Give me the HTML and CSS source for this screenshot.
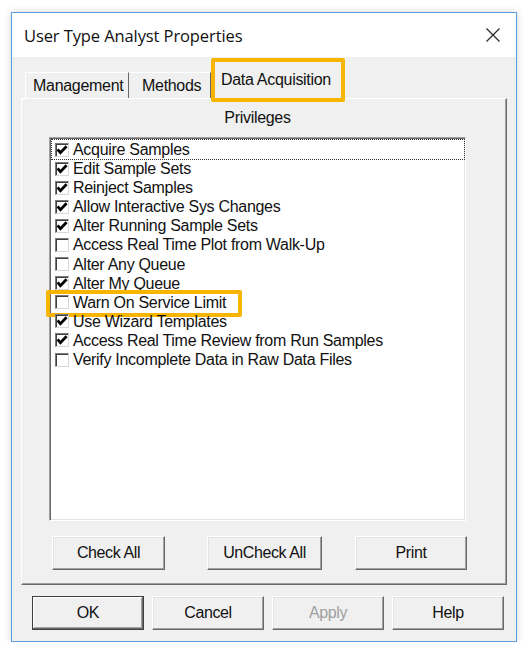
FILE: index.html
```html
<!DOCTYPE html>
<html>
<head>
<meta charset="utf-8">
<link rel="stylesheet" href="styles.css">
</head>
<body>
<div class="window">
  <div class="titlebar">
    <span class="title">User Type Analyst Properties</span>
    <svg class="close" width="16" height="16" viewBox="0 0 16 16"><path d="M1.5 1.5 L14.5 14.5 M14.5 1.5 L1.5 14.5" stroke="#2b2b2b" stroke-width="1.3" fill="none"/></svg>
  </div>
  <div class="client">
    <div class="tabstrip">
      <div class="tab tab-mgmt">Management</div>
      <div class="tab tab-meth">Methods</div>
      <div class="tab tab-sel">Data Acquisition</div>
    </div>
    <div class="panel">
      <div class="group">
        <div class="label">Privileges</div>
        <div class="list">
          <div class="item focus"><span class="cb on"></span>Acquire Samples</div>
          <div class="item"><span class="cb on"></span>Edit Sample Sets</div>
          <div class="item"><span class="cb on"></span>Reinject Samples</div>
          <div class="item"><span class="cb on"></span>Allow Interactive Sys Changes</div>
          <div class="item"><span class="cb on"></span>Alter Running Sample Sets</div>
          <div class="item"><span class="cb"></span>Access Real Time Plot from Walk-Up</div>
          <div class="item"><span class="cb"></span>Alter Any Queue</div>
          <div class="item"><span class="cb on"></span>Alter My Queue</div>
          <div class="item hl-row"><span class="cb"></span>Warn On Service Limit<span class="hl"></span></div>
          <div class="item"><span class="cb on"></span>Use Wizard Templates</div>
          <div class="item"><span class="cb on"></span>Access Real Time Review from Run Samples</div>
          <div class="item"><span class="cb"></span>Verify Incomplete Data in Raw Data Files</div>
        </div>
      </div>
      <div class="btnrow">
        <button class="btn b-check">Check All</button>
        <button class="btn b-uncheck">UnCheck All</button>
        <button class="btn b-print">Print</button>
      </div>
    </div>
    <div class="dlgrow">
      <button class="btn dlg default">OK</button>
      <button class="btn dlg">Cancel</button>
      <button class="btn dlg disabled">Apply</button>
      <button class="btn dlg">Help</button>
    </div>
  </div>
</div>
</body>
</html>
```
FILE: styles.css
```css
* { box-sizing: border-box; }
html, body { margin: 0; padding: 0; background: #fff; }
body { font-family: "Liberation Sans", Arial, sans-serif; }

.window {
  margin: 12px 0 0 11px;
  width: 506px;
  height: 630px;
  border: 1px solid #5e9de2;
  background: #f0f0f0;
  box-shadow: 0 0 7px rgba(0,0,0,0.18);
  display: flex;
  flex-direction: column;
}

.titlebar {
  height: 44px;
  background: #fff;
  display: flex;
  align-items: center;
  justify-content: space-between;
  padding: 0 15px 0 12px;
}
.title {
  font-family: "Open Sans", "Noto Sans", sans-serif;
  font-size: 16.5px;
  color: #111;
  letter-spacing: -0.1px;
}
.close { display: block; }

.client {
  flex: 1;
  padding: 0 9px 0 9px;
  display: flex;
  flex-direction: column;
  font-size: 16px;
  letter-spacing: -0.3px;
  color: #111;
}

.tabstrip {
  height: 41px;
  display: flex;
  align-items: flex-end;
  padding-left: 4px;
}
.tab {
  height: 26px;
  display: flex;
  align-items: center;
  border-top: 1px solid #fff;
  border-left: 1px solid #fff;
  border-right: 1px solid #696969;
}
.tab-mgmt { width: 104px; padding-left: 7px; }
.tab-meth { width: 82px; padding-left: 13px; border-left: none; }
.tab-sel {
  position: relative;
  z-index: 1;
  width: 134px;
  height: 44px;
  margin-bottom: -4px;
  border: 4px solid #f8b500;
  border-radius: 2px;
  background: #f0f0f0;
  padding-left: 6px;
  padding-bottom: 0;
}

.panel {
  height: 487px;
  width: 486px;
  border-top: 1px solid #fff;
  border-left: 1px solid #fff;
  border-right: 1px solid #696969;
  border-bottom: 1px solid #696969;
  box-shadow: inset -1px -1px 0 #a0a0a0;
  padding-left: 27px;
  display: flex;
  flex-direction: column;
}

.group { width: 417px; }
.label {
  margin-top: 9px;
  height: 20px;
  line-height: 20px;
  text-align: center;
  margin-bottom: 9px;
}
.list {
  height: 384px;
  background: #fff;
  border: 1px solid;
  border-color: #a0a0a0 #fff #fff #a0a0a0;
  box-shadow: inset 1px 1px 0 #696969, inset -1px -1px 0 #e3e3e3;
  padding: 2px 1px 0 2px;
}
.item {
  position: relative;
  height: 19.1px;
  line-height: 19.1px;
  display: flex;
  align-items: center;
  white-space: nowrap;
  padding-left: 3px;
}
.item.focus { outline: 1px dotted #333; outline-offset: 0; }
.cb {
  width: 14px;
  height: 14px;
  flex: none;
  margin-right: 4px;
  background: #fff;
  border: 1px solid;
  border-color: #7a7a7a #d8d8d8 #d8d8d8 #7a7a7a;
  box-shadow: inset 1px 1px 0 #404040;
}
.cb.on {
  background: #fff url("data:image/svg+xml;utf8,<svg xmlns='http://www.w3.org/2000/svg' width='12' height='12' viewBox='0 0 12 12'><path d='M1.6 5.4 L4.4 8.6 L10.6 2.2' stroke='black' stroke-width='2.8' fill='none'/></svg>") no-repeat center;
}
.hl {
  position: absolute;
  left: -6px;
  top: -3px;
  width: 196px;
  height: 27px;
  border: 4px solid #f8b500;
  border-radius: 2px;
}

.btnrow {
  display: flex;
  margin-top: 15px;
  margin-left: 3px;
}
.btn {
  font-family: "Liberation Sans", Arial, sans-serif;
  font-size: 16px;
  letter-spacing: -0.4px;
  color: #111;
  background: #f0f0f0;
  height: 34px;
  padding: 0;
  border: 1px solid;
  border-color: #fff #696969 #696969 #fff;
  box-shadow: inset -1px -1px 0 #a0a0a0, inset 1px 1px 0 #e3e3e3;
}
.b-check { width: 113px; }
.b-uncheck { width: 115px; margin-left: 42px; }
.b-print { width: 112px; margin-left: 33px; }

.dlgrow {
  display: flex;
  gap: 8px;
  margin-top: 11px;
  padding-left: 11px;
}
.dlg { width: 112px; }
.dlg.default {
  border: 1px solid #404040;
  box-shadow: inset -1px -1px 0 #696969, inset 1px 1px 0 #fff, inset -2px -2px 0 #a0a0a0;
}
.dlg.disabled { color: #a0a0a0; }
```
